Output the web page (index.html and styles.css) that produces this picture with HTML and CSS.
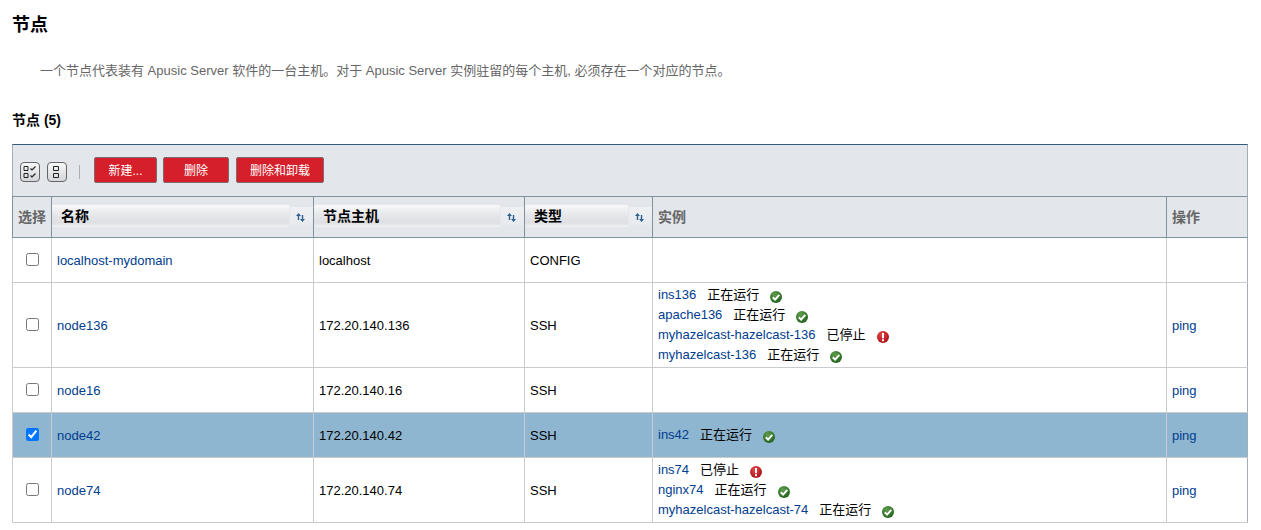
FILE: index.html
```html
<!DOCTYPE html>
<html lang="zh">
<head>
<meta charset="utf-8">
<title>节点</title>
<link rel="stylesheet" href="styles.css">
</head>
<body>
<svg class="defs" width="0" height="0" aria-hidden="true">
  <defs>
    <radialGradient id="gg" cx="40%" cy="30%" r="75%"><stop offset="0" stop-color="#5f9e4a"/><stop offset="1" stop-color="#1f5f1c"/></radialGradient>
    <radialGradient id="rg" cx="40%" cy="30%" r="75%"><stop offset="0" stop-color="#e8474a"/><stop offset="1" stop-color="#a50f14"/></radialGradient>
    <symbol id="ok" viewBox="0 0 12 12"><circle cx="6" cy="6" r="6" fill="url(#gg)"/><path d="M2.8 6.2 5.1 8.6 9.3 3.8" fill="none" stroke="#fff" stroke-width="2"/></symbol>
    <symbol id="err" viewBox="0 0 12 12"><circle cx="6" cy="6" r="6" fill="url(#rg)"/><rect x="5" y="2" width="2" height="5.2" fill="#fff"/><rect x="5" y="8.2" width="2" height="2" fill="#fff"/></symbol>
    <symbol id="sort" viewBox="0 0 9 9"><path d="M2.5 0 5 3H3.2V7H1.8V3H0ZM6.5 9 4 6H5.8V2H7.2V6H9Z" fill="#2f5f8f"/></symbol>
  </defs>
</svg>
<h1 class="title">节点</h1>
<p class="desc">一个节点代表装有 Apusic Server 软件的一台主机。对于 Apusic Server 实例驻留的每个主机, 必须存在一个对应的节点。</p>
<h2 class="caption">节点 (5)</h2>
<div class="panel">
  <div class="toolbar">
    <button class="tool-icon" aria-label="全选"><svg width="14" height="14" viewBox="0 0 14 14"><path d="M1 1.5H5V5.5H1ZM1 8.5H5V12.5H1Z" fill="none" stroke="#222"/><path d="M7.5 3.5 9 5 12.5 1.5M7.5 10.5 9 12 12.5 8.5" fill="none" stroke="#222" stroke-width="1.2"/></svg></button>
    <button class="tool-icon" aria-label="全不选"><svg width="14" height="14" viewBox="0 0 14 14"><path d="M3.5 1.5H8.5V5.5H3.5ZM3.5 8.5H8.5V12.5H3.5Z" fill="none" stroke="#222"/></svg></button>
    <span class="sep"></span>
    <button class="btn btn-new">新建...</button>
    <button class="btn btn-del">删除</button>
    <button class="btn btn-un">删除和卸载</button>
  </div>
  <table class="grid">
    <colgroup><col class="c1"><col class="c2"><col class="c3"><col class="c4"><col class="c5"><col class="c6"></colgroup>
    <thead>
      <tr>
        <th class="plain">选择</th>
        <th><div class="sorth"><span class="label">名称</span><span class="sortbtn"><svg width="9" height="9"><use href="#sort"/></svg></span></div></th>
        <th><div class="sorth"><span class="label">节点主机</span><span class="sortbtn"><svg width="9" height="9"><use href="#sort"/></svg></span></div></th>
        <th><div class="sorth"><span class="label">类型</span><span class="sortbtn"><svg width="9" height="9"><use href="#sort"/></svg></span></div></th>
        <th class="plain">实例</th>
        <th class="plain">操作</th>
      </tr>
    </thead>
    <tbody>
      <tr class="r45">
        <td class="chk"><input type="checkbox"></td>
        <td><a href="#">localhost-mydomain</a></td><td>localhost</td><td>CONFIG</td><td></td><td></td>
      </tr>
      <tr class="r85">
        <td class="chk"><input type="checkbox"></td>
        <td><a href="#">node136</a></td><td>172.20.140.136</td><td>SSH</td>
        <td class="inst">
          <div class="line"><a href="#">ins136</a><span class="st">正在运行</span><svg class="si" width="12" height="12"><use href="#ok"/></svg></div>
          <div class="line"><a href="#">apache136</a><span class="st">正在运行</span><svg class="si" width="12" height="12"><use href="#ok"/></svg></div>
          <div class="line"><a href="#">myhazelcast-hazelcast-136</a><span class="st">已停止</span><svg class="si" width="12" height="12"><use href="#err"/></svg></div>
          <div class="line"><a href="#">myhazelcast-136</a><span class="st">正在运行</span><svg class="si" width="12" height="12"><use href="#ok"/></svg></div>
        </td>
        <td><a href="#">ping</a></td>
      </tr>
      <tr class="r45">
        <td class="chk"><input type="checkbox"></td>
        <td><a href="#">node16</a></td><td>172.20.140.16</td><td>SSH</td><td></td><td><a href="#">ping</a></td>
      </tr>
      <tr class="r45 sel">
        <td class="chk"><input type="checkbox" checked></td>
        <td><a href="#">node42</a></td><td>172.20.140.42</td><td>SSH</td>
        <td class="inst"><div class="line"><a href="#">ins42</a><span class="st">正在运行</span><svg class="si" width="12" height="12"><use href="#ok"/></svg></div></td>
        <td><a href="#">ping</a></td>
      </tr>
      <tr class="r65">
        <td class="chk"><input type="checkbox"></td>
        <td><a href="#">node74</a></td><td>172.20.140.74</td><td>SSH</td>
        <td class="inst">
          <div class="line"><a href="#">ins74</a><span class="st">已停止</span><svg class="si" width="12" height="12"><use href="#err"/></svg></div>
          <div class="line"><a href="#">nginx74</a><span class="st">正在运行</span><svg class="si" width="12" height="12"><use href="#ok"/></svg></div>
          <div class="line"><a href="#">myhazelcast-hazelcast-74</a><span class="st">正在运行</span><svg class="si" width="12" height="12"><use href="#ok"/></svg></div>
        </td>
        <td><a href="#">ping</a></td>
      </tr>
    </tbody>
  </table>
</div>
</body>
</html>
```

FILE: styles.css
```css
* { box-sizing: border-box; }
html, body { margin: 0; padding: 0; background: #fff; overflow: hidden; }
body {
  padding: 0 13px 0 12px;
  font-family: "Liberation Sans", "Noto Sans CJK SC", sans-serif;
  font-size: 13px;
  color: #000;
}
.defs { position: absolute; }
.title { margin: 0; padding-top: 14px; font-size: 18px; line-height: 22px; font-weight: bold; }
.desc { margin: 0; padding: 23px 0 0 28px; font-size: 13px; line-height: 24px; color: #666; }
.caption { margin: 0; padding-top: 29px; font-size: 14px; line-height: 17px; font-weight: bold; }
.panel { margin-top: 15px; width: 1236px; }
.toolbar {
  height: 52px;
  display: flex;
  align-items: center;
  padding: 0 0 1px 7px;
  background: #e3e7ec;
  border: 1px solid #a3adb6;
  border-top: 1px solid #355b7a;
  border-bottom: 0;
}
.tool-icon {
  width: 20px; height: 20px; padding: 0;
  margin-right: 7px;
  display: flex; align-items: center; justify-content: center;
  border: 1px solid #666; border-radius: 4px;
  background: linear-gradient(#f7f7f8, #d4d6d9);
  position: relative; top: 2px;
}
.sep { width: 1px; height: 14px; background: #a9afb5; margin: 3px 14px 0 5px; }
.btn {
  height: 26px; padding: 0 0 2px;
  margin-right: 7px;
  background: #d51f2a;
  color: #fff;
  border: 1px solid #7d6a6d;
  border-radius: 2px;
  font: 12px "Liberation Sans", "Noto Sans CJK SC", sans-serif;
}
.btn-new { width: 63px; margin-right: 6px; }
.btn-del { width: 66px; }
.btn-un { width: 88px; }
.grid { border-collapse: collapse; table-layout: fixed; width: 1235px; }
.c1 { width: 39px; } .c2 { width: 262px; } .c3 { width: 211px; } .c4 { width: 128px; } .c5 { width: 514px; } .c6 { width: 81px; }
.grid th {
  height: 41px; padding: 0;
  background: #e3e7ec;
  border: 1px solid #7f939f;
  text-align: left;
  font-size: 14px;
}
.grid th:last-child { border-right-color: #a3adb6; }
.plain { color: #666; padding: 0 0 3px 5px !important; }
.sorth { display: flex; align-items: center; height: 39px; padding-bottom: 2px; }
.label {
  flex: 1; height: 22px; line-height: 22px; padding-left: 9px;
  color: #000;
  background: linear-gradient(#f8f8f9, #e6e7ea 45%, #dfe0e4 80%, #eef0f2);
}
.sortbtn {
  width: 23px; height: 19px; margin-left: 1px; padding: 3px 2px 0 0;
  display: flex; align-items: center; justify-content: center;
  background: linear-gradient(#eef0f3, #e6e9ee);
}
.grid td { padding: 0 5px; border: 1px solid #c9cbcd; vertical-align: middle; }
.grid td:last-child { border-right-color: #a3adb6; }
.r45 td { height: 45px; }
.r85 td { height: 85px; }
.r65 td { height: 65px; }
.chk { text-align: center; padding: 0 !important; }
.chk input { margin: 0; width: 13px; height: 13px; vertical-align: middle; position: relative; top: -2px; }
.sel td { background: #8fb6d0; }
a { color: #003d8f; text-decoration: none; }
.line { display: flex; align-items: baseline; height: 20px; line-height: 20px; white-space: nowrap; }
.st { margin-left: 11px; }
.si { margin-left: 11px; position: relative; top: 4px; }
```
